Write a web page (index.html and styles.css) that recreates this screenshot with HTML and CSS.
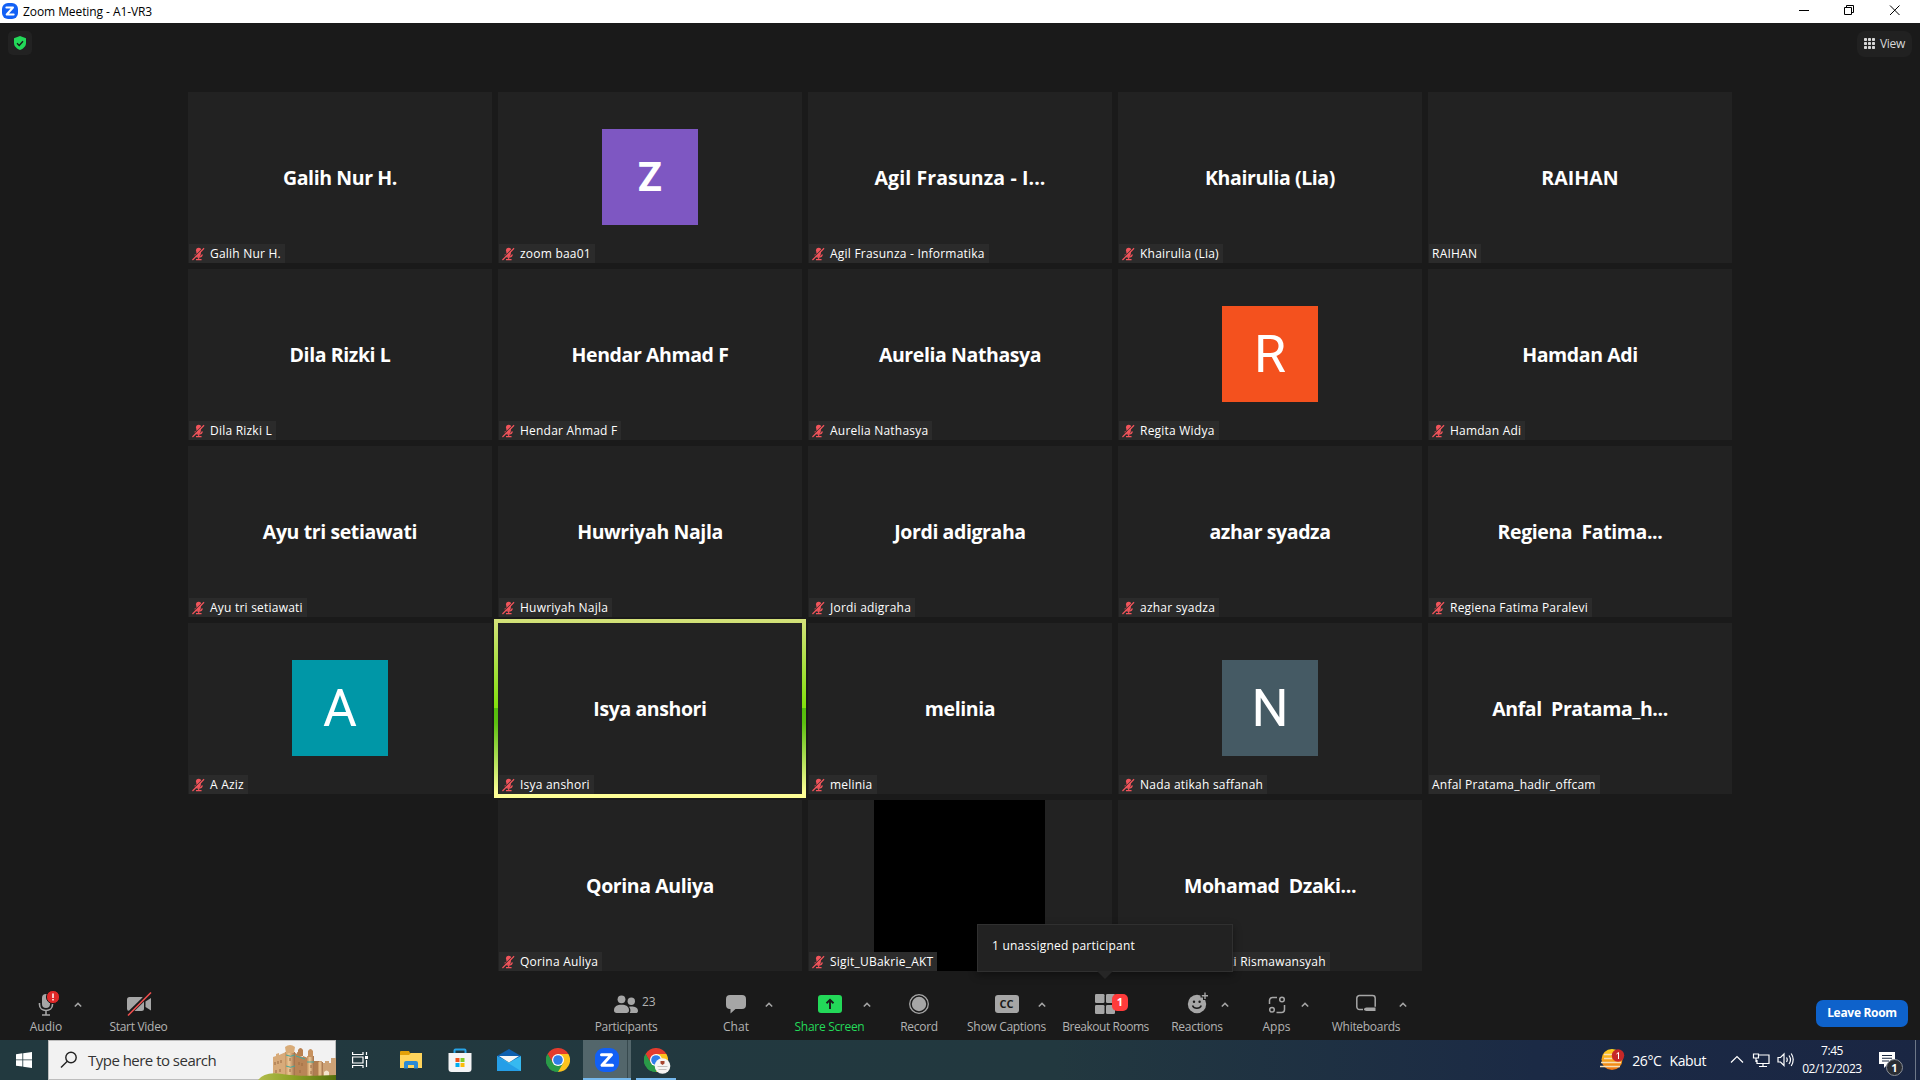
FILE: index.html
```html
<!DOCTYPE html>
<html lang="en">
<head>
    <meta charset="UTF-8">
    <meta name="viewport" content="width=device-width, initial-scale=1.0">
    <title>Zoom Meeting - A1-VR3</title>
    <link rel="stylesheet" href="styles.css">
</head>
<body>
    <!-- Shared icons -->
    <svg class="sprite" width="0" height="0">
        <symbol id="muted" viewBox="0 0 14 14">
            <path d="M4.300 3q0-2.700 2.900-2.700T10.100 3L9 9.500Q7.200 11 5.400 9.500Z" fill="#f2545b"/>
            <path d="M3.300 7.500q0.500 3 3.900 3t3.900-3M7.200 10.500v2.500M4.300 13h6" fill="none" stroke="#f2545b" stroke-width="1.200"/>
            <path d="M0.500 12.300L12.300 0.500" stroke="#2b2b2b" stroke-width="1.200"/>
            <path d="M0.500 13.500L13 0.800" stroke="#f2545b" stroke-width="1.300"/>
        </symbol>
        <symbol id="chevron" viewBox="0 0 8 6">
            <path d="M0.800 4.500L4 1.400L7.200 4.500" fill="none" stroke="#a6a6a6" stroke-width="1.500"/>
        </symbol>
        <symbol id="zoom-logo" viewBox="0 0 24 24">
            <rect width="24" height="24" rx="9" fill="#1260f5"/>
            <path d="M6.500 6.700H16.500L7 17.300H17.500" fill="none" stroke="#fff" stroke-width="3" stroke-linejoin="round" stroke-linecap="round"/>
        </symbol>
        <symbol id="chrome" viewBox="0 0 24 24">
            <path d="M12 12L1.600 6A12 12 0 0 1 22.400 6Z" fill="#e33b2e"/>
            <path d="M12 12L12 24A12 12 0 0 0 22.400 6Z" fill="#fcc31e"/>
            <path d="M12 6H22.400L17.200 15L12 12Z" fill="#fcc31e"/>
            <path d="M1.600 6L6.800 15L12 18L17.200 15L12 24A12 12 0 0 1 1.600 6Z" fill="#2a9a48"/>
            <path d="M1.600 6L6.800 15L12 12L12 6Z" fill="#e33b2e"/>
            <path d="M1.600 6L6.800 15L12 18L12 24A12 12 0 0 1 1.600 6Z" fill="#2a9a48"/>
            <circle cx="12" cy="12" r="6" fill="#fff"/>
            <circle cx="12" cy="12" r="4.800" fill="#2f7de9"/>
        </symbol>
    </svg>

    <!-- Title bar -->
    <header class="titlebar">
        <svg class="titlebar-logo" width="16" height="16"><use href="#zoom-logo"/></svg>
        <span class="titlebar-text">Zoom Meeting - A1-VR3</span>
        <svg class="window-controls" width="106" height="20" viewBox="0 0 106 20" fill="none" stroke="#000">
            <path d="M2 10.500h10"/>
            <path d="M47.500 7.500h7v7h-7zM49.500 7.500v-2h7v7h-2"/>
            <path d="M93 5.500l9.500 9.500M102.500 5.500L93 15"/>
        </svg>
    </header>

    <!-- Meeting area -->
    <main class="meeting">
        <div class="meeting-top">
            <div class="shield">
                <svg width="14" height="14" viewBox="0 0 14 14">
                    <path d="M7 0L13 2.300V7C13 10.500 10 12.800 7 14C4 12.800 1 10.500 1 7V2.300Z" fill="#23d959"/>
                    <path d="M4 7.300L6.200 9.400L10 5.200" fill="none" stroke="#1a1a1a" stroke-width="1.400"/>
                </svg>
            </div>
            <div class="view-btn">
                <svg width="11" height="11" viewBox="0 0 11 11" fill="#d8d8d8">
                    <rect width="3" height="3" rx="0.700"/><rect x="4" width="3" height="3" rx="0.700"/><rect x="8" width="3" height="3" rx="0.700"/>
                    <rect y="4" width="3" height="3" rx="0.700"/><rect x="4" y="4" width="3" height="3" rx="0.700"/><rect x="8" y="4" width="3" height="3" rx="0.700"/>
                    <rect y="8" width="3" height="3" rx="0.700"/><rect x="4" y="8" width="3" height="3" rx="0.700"/><rect x="8" y="8" width="3" height="3" rx="0.700"/>
                </svg>
                <span>View</span>
            </div>
        </div>

        <div class="gallery">
            <div class="tile"><h2>Galih Nur H.</h2><p class="tag"><svg><use href="#muted"/></svg>Galih Nur H.</p></div>
            <div class="tile"><div class="avatar purple">Z</div><p class="tag"><svg><use href="#muted"/></svg>zoom baa01</p></div>
            <div class="tile"><h2 class="wide">Agil Frasunza - I...</h2><p class="tag"><svg><use href="#muted"/></svg>Agil Frasunza - Informatika</p></div>
            <div class="tile"><h2>Khairulia (Lia)</h2><p class="tag"><svg><use href="#muted"/></svg>Khairulia (Lia)</p></div>
            <div class="tile"><h2 class="wide">RAIHAN</h2><p class="tag">RAIHAN</p></div>

            <div class="tile"><h2>Dila Rizki L</h2><p class="tag"><svg><use href="#muted"/></svg>Dila Rizki L</p></div>
            <div class="tile"><h2>Hendar Ahmad F</h2><p class="tag"><svg><use href="#muted"/></svg>Hendar Ahmad F</p></div>
            <div class="tile"><h2>Aurelia Nathasya</h2><p class="tag"><svg><use href="#muted"/></svg>Aurelia Nathasya</p></div>
            <div class="tile"><div class="avatar orange">R</div><p class="tag"><svg><use href="#muted"/></svg>Regita Widya</p></div>
            <div class="tile"><h2>Hamdan Adi</h2><p class="tag"><svg><use href="#muted"/></svg>Hamdan Adi</p></div>

            <div class="tile"><h2>Ayu tri setiawati</h2><p class="tag"><svg><use href="#muted"/></svg>Ayu tri setiawati</p></div>
            <div class="tile"><h2>Huwriyah Najla</h2><p class="tag"><svg><use href="#muted"/></svg>Huwriyah Najla</p></div>
            <div class="tile"><h2>Jordi adigraha</h2><p class="tag"><svg><use href="#muted"/></svg>Jordi adigraha</p></div>
            <div class="tile"><h2>azhar syadza</h2><p class="tag"><svg><use href="#muted"/></svg>azhar syadza</p></div>
            <div class="tile"><h2>Regiena&nbsp; Fatima...</h2><p class="tag"><svg><use href="#muted"/></svg>Regiena Fatima Paralevi</p></div>

            <div class="tile"><div class="avatar teal">A</div><p class="tag"><svg><use href="#muted"/></svg>A Aziz</p></div>
            <div class="tile speaking"><h2>Isya anshori</h2><p class="tag"><svg><use href="#muted"/></svg>Isya anshori</p></div>
            <div class="tile"><h2>melinia</h2><p class="tag"><svg><use href="#muted"/></svg>melinia</p></div>
            <div class="tile"><div class="avatar slate">N</div><p class="tag"><svg><use href="#muted"/></svg>Nada atikah saffanah</p></div>
            <div class="tile"><h2>Anfal&nbsp; Pratama_h...</h2><p class="tag">Anfal Pratama_hadir_offcam</p></div>

            <div class="tile last-row"><h2>Qorina Auliya</h2><p class="tag"><svg><use href="#muted"/></svg>Qorina Auliya</p></div>
            <div class="tile"><div class="video"></div><p class="tag"><svg><use href="#muted"/></svg>Sigit_UBakrie_AKT</p></div>
            <div class="tile"><h2>Mohamad&nbsp; Dzaki...</h2><p class="tag"><svg><use href="#muted"/></svg>Mohamad&nbsp; Dzaki Rismawansyah</p></div>
        </div>

        <!-- Meeting controls -->
        <nav class="controls">
            <div class="tool audio">
                <svg width="30" height="28" viewBox="0 0 30 28">
                    <rect x="11" y="4" width="8" height="14" rx="4" fill="#a6a6a6"/>
                    <path d="M8.500 13v1.500c0 4 3 6 6.500 6s6.500-2 6.500-6v-1.500M15 20.500v4M11 25h8" fill="none" stroke="#a6a6a6" stroke-width="1.600"/>
                    <circle cx="22" cy="7" r="6.600" fill="#e02828" stroke="#1a1a1a"/>
                    <path d="M22 3.500v4.500M22 9v1.500" stroke="#fff" stroke-width="1.500"/>
                </svg>
                <span>Audio</span>
            </div>
            <svg class="more w20" viewBox="0 0 8 6"><use href="#chevron"/></svg>
            <div class="tool start-video">
                <svg width="26" height="28" viewBox="0 0 26 28">
                    <rect x="1" y="7" width="17" height="14" rx="2.500" fill="#a6a6a6"/>
                    <path d="M19.500 11.500L25 8v12.500L19.500 17Z" fill="#a6a6a6"/>
                    <path d="M2 24.500L24.500 2.500" stroke="#1a1a1a" stroke-width="4"/>
                    <path d="M2 25.500L25 2.500" stroke="#f0504f" stroke-width="1.600"/>
                </svg>
                <span>Start Video</span>
            </div>
            <div class="tool participants">
                <svg width="24" height="28" viewBox="0 0 24 28" fill="#a6a6a6">
                    <circle cx="7.500" cy="9.300" r="3.900"/>
                    <path d="M0 20.500c0-4 3-5.700 7.500-5.700s7.500 1.700 7.500 5.700c0 1.500-1 2.500-2.500 2.500h-10c-1.500 0-2.500-1-2.500-2.500z"/>
                    <circle cx="17.300" cy="11.300" r="3.700"/>
                    <path d="M15 16.700c4-.8 9 .3 9 4 0 1.500-.8 2.300-2.300 2.300h-6c1.300-2 .8-4.600-.7-6.300z"/>
                </svg>
                <span>Participants</span>
                <b class="count">23</b>
            </div>
            <div class="tool chat">
                <svg width="20" height="28" viewBox="0 0 20 28">
                    <path d="M4 5h12a4 4 0 0 1 4 4v6a4 4 0 0 1-4 4h-6.500L4.500 23.500V19H4a4 4 0 0 1-4-4V9a4 4 0 0 1 4-4z" fill="#a6a6a6"/>
                </svg>
                <span>Chat</span>
            </div>
            <svg class="more w20" viewBox="0 0 8 6"><use href="#chevron"/></svg>
            <div class="tool share">
                <svg width="24" height="28" viewBox="0 0 24 28">
                    <rect y="5" width="24" height="18" rx="3" fill="#23d959"/>
                    <path d="M12 19V10M8.500 13.200L12 9.800L15.500 13.200" fill="none" stroke="#1a1a1a" stroke-width="1.900"/>
                </svg>
                <span>Share Screen</span>
            </div>
            <svg class="more w26" viewBox="0 0 8 6"><use href="#chevron"/></svg>
            <div class="tool record">
                <svg width="20" height="28" viewBox="0 0 20 28">
                    <circle cx="10" cy="14" r="9.300" fill="none" stroke="#a6a6a6" stroke-width="1.300"/>
                    <circle cx="10" cy="14" r="7.200" fill="#a6a6a6"/>
                </svg>
                <span>Record</span>
            </div>
            <div class="tool captions">
                <i class="cc">CC</i>
                <span>Show Captions</span>
            </div>
            <svg class="more w28" viewBox="0 0 8 6"><use href="#chevron"/></svg>
            <div class="tool breakout">
                <svg width="22" height="28" viewBox="0 0 22 28" fill="#a6a6a6">
                    <rect x="0" y="4" width="9.500" height="9" rx="1.300"/><rect x="11" y="4" width="9" height="9" rx="1.300"/>
                    <rect x="0" y="15" width="9.500" height="9" rx="1.300"/><rect x="11" y="15" width="9" height="9" rx="1.300"/>
                </svg>
                <span>Breakout Rooms</span>
                <b class="badge">1</b>
                <div class="tooltip">1 unassigned participant</div>
            </div>
            <div class="tool reactions">
                <svg width="22" height="28" viewBox="0 0 22 28">
                    <circle cx="11" cy="14" r="9.200" fill="#a6a6a6"/>
                    <path d="M19 1v9M14.500 5.500h8" stroke="#1a1a1a" stroke-width="4"/>
                    <path d="M19 2.500v6.500M15.800 5.700h6.200" stroke="#a6a6a6" stroke-width="1.400"/>
                    <circle cx="8" cy="11.800" r="1.200" fill="#1a1a1a"/><circle cx="13.600" cy="11.800" r="1.200" fill="#1a1a1a"/>
                    <path d="M6.500 15.500c1.500 3.700 7.300 3.700 8.800 0" fill="none" stroke="#1a1a1a" stroke-width="1.500"/>
                </svg>
                <span>Reactions</span>
            </div>
            <svg class="more w22" viewBox="0 0 8 6"><use href="#chevron"/></svg>
            <div class="tool apps">
                <svg width="18" height="28" viewBox="0 0 18 28" fill="none" stroke="#a6a6a6" stroke-width="1.500">
                    <path d="M1.500 13V10.500a3 3 0 0 1 3-3H9M16.500 15v4.500a3 3 0 0 1-3 3H9M1.500 13v1M9.500 22.500h-1"/>
                    <circle cx="14" cy="9.500" r="2.300"/>
                    <circle cx="4" cy="19.800" r="2.300"/>
                </svg>
                <span>Apps</span>
            </div>
            <svg class="more w20" viewBox="0 0 8 6"><use href="#chevron"/></svg>
            <div class="tool whiteboards">
                <svg width="20" height="28" viewBox="0 0 20 28">
                    <path d="M7 19.500H3.500a2.700 2.700 0 0 1-2.700-2.700V8.300a2.700 2.700 0 0 1 2.700-2.700h13a2.700 2.700 0 0 1 2.700 2.700v8.500" fill="none" stroke="#a6a6a6" stroke-width="1.500"/>
                    <path d="M10.500 17.500H19.500V21H10.500Q8 21 8 19.300Q8 17.500 10.500 17.500Z" fill="#a6a6a6"/>
                </svg>
                <span>Whiteboards</span>
            </div>
            <svg class="more w22" viewBox="0 0 8 6"><use href="#chevron"/></svg>
            <button class="leave">Leave Room</button>
        </nav>
    </main>

    <!-- Windows taskbar -->
    <footer class="taskbar">
        <div class="start">
            <svg width="16" height="16" viewBox="0 0 16 16" fill="#fff">
                <path d="M0 2.200L6.400 1.300V7.500H0ZM7.200 1.200L16 0V7.500H7.200ZM0 8.300H6.400V14.600L0 13.700ZM7.200 8.300H16V16L7.200 14.800Z"/>
            </svg>
        </div>
        <div class="search">
            <svg width="18" height="18" viewBox="0 0 18 18" fill="none" stroke="#222" stroke-width="1.400">
                <circle cx="11" cy="6.500" r="5.200"/><path d="M7.300 10.300L1 16.500"/>
            </svg>
            <span>Type here to search</span>
            <svg class="castle" width="78" height="36" viewBox="0 0 78 36">
                <defs>
                    <linearGradient id="stone" x1="0" x2="1">
                        <stop offset="0" stop-color="#c3925f"/><stop offset="0.400" stop-color="#edc796"/><stop offset="1" stop-color="#a06f49"/>
                    </linearGradient>
                    <linearGradient id="grass" x1="0" x2="1">
                        <stop offset="0" stop-color="#b3bd4d"/><stop offset="0.450" stop-color="#8ba125"/><stop offset="1" stop-color="#54700c"/>
                    </linearGradient>
                </defs>
                <path d="M15 13l3-1v-2l3-1v2l7-3v26H15z" fill="#d8ab7a"/>
                <path d="M36 8l3 2v-2l3 1v3l3 1v-1l5 2v22H36z" fill="#b98557"/>
                <path d="M58 19h3v-2h3v2h3v-2h4v2h2v-5h5v20H58z" fill="#cda276"/>
                <path d="M27 8h10v26H27z" fill="url(#stone)"/>
                <path d="M27 3q5-4 10 0l-1 6h-8z" fill="#d9ac78"/>
                <path d="M40 6q2.500-4 5 0v6h-5z" fill="#b9804f"/>
                <path d="M49 12h7v22h-7z" fill="url(#stone)"/>
                <path d="M50 7q2.500-4 5 0v6h-5z" fill="#c7925f"/>
                <path d="M56 17h5v16h-5z" fill="#b07d50"/>
                <path d="M60 18h5v14h-5z" fill="url(#stone)"/>
                <path d="M28 11q4.500 2.500 9 0M28 22q4.500 2.500 9 0M38 12l9 3M49 18h7" fill="none" stroke="#45a79c"/>
                <path d="M17 18v3M20 17v3M23 16v3M18 26v3M22 25v3M32 14v3M32 25v3M41 18v3M44 19v3M42 26v3M53 21v3M53 27v3" stroke="#9b6a42"/>
                <path d="M66 33v-5q2.500-3 5 0v5z" fill="#f3e3cb"/>
                <path d="M0 36Q7 27 24 30Q40 33 78 31V36Z" fill="url(#grass)"/>
            </svg>
        </div>
        <div class="apps-bar">
            <div class="app task-view">
                <svg width="17" height="16" viewBox="0 0 17 16" fill="none" stroke="#fff" stroke-width="1.200">
                    <path d="M0.600 0v2.500h10.400V0M0.600 16v-2.500h10.400V16M0.600 5h10.400v6H0.600zM14.500 0v3M14.500 8v7"/>
                    <path d="M13 4h3v3h-3z" fill="#fff" stroke="none"/>
                </svg>
            </div>
            <div class="app">
                <svg width="22" height="20" viewBox="0 0 22 20">
                    <path d="M0 2q0-1 1-1h8l1 2h12v15H0z" fill="#e2a008"/>
                    <path d="M0 5h9l2-2h11v15H0z" fill="#ffd45c"/>
                    <path d="M4 18.500V13q0-2 2-2h10q2 0 2 2v5.500h-4V15H8v3.500z" fill="#2b8ad6"/>
                </svg>
            </div>
            <div class="app">
                <svg width="24" height="24" viewBox="0 0 24 24">
                    <path d="M6.500 6V2.500q0-1 1-1h9q1 0 1 1V6" fill="none" stroke="#27a4e8" stroke-width="2"/>
                    <path d="M0.500 5h23v16q0 3-3 3h-17q-3 0-3-3z" fill="#f4f4f5"/>
                    <path d="M7.500 10h4v4h-4z" fill="#f1511b"/><path d="M12.500 10h4v4h-4z" fill="#80cc28"/>
                    <path d="M7.500 15h4v4h-4z" fill="#00adef"/><path d="M12.500 15h4v4h-4z" fill="#fbbc09"/>
                </svg>
            </div>
            <div class="app">
                <svg width="24" height="24" viewBox="0 0 24 24">
                    <path d="M0 8L12 1L24 8V13H0Z" fill="#0f5fae"/>
                    <path d="M0 8L12 14.500L24 8V23H0Z" fill="#36b9f0"/>
                    <path d="M0 8L24 23H0Z" fill="#1e93e2" opacity="0.700"/>
                    <path d="M2 8H22L12 14.500Z" fill="#f7f7f7"/>
                </svg>
            </div>
            <div class="app"><svg width="24" height="24"><use href="#chrome"/></svg></div>
            <div class="app active"><svg width="24" height="24"><use href="#zoom-logo"/></svg></div>
            <div class="app running">
                <svg width="28" height="26" viewBox="0 0 28 26">
                    <use href="#chrome" width="24" height="24"/>
                    <circle cx="18.500" cy="18" r="7.800" fill="#f6f4f3"/>
                    <path d="M16.500 13h4v2.500l-2 1.500-2-1.500z" fill="#a8452e"/>
                    <path d="M13.500 18.500h10M14.500 21.500h8" stroke="#c5c0be"/>
                </svg>
            </div>
        </div>
        <div class="weather">
            <svg width="25" height="22" viewBox="0 0 25 22">
                <defs>
                    <linearGradient id="sun" x1="0" y1="0" x2="0" y2="1">
                        <stop offset="0" stop-color="#ffd322"/><stop offset="1" stop-color="#ef7414"/>
                    </linearGradient>
                </defs>
                <circle cx="12" cy="10.500" r="10.500" fill="url(#sun)"/>
                <path d="M4 5.500h8M4 9.500h8M1 13.500h20M0 17.500h20" stroke="#f6dfb6" stroke-width="1.600"/>
                <circle cx="18" cy="6.500" r="6.200" fill="#c62828"/>
                <path d="M16.500 5L18.500 3.500V10" fill="none" stroke="#fff"/>
            </svg>
            <span class="temp">26°C</span><span>Kabut</span>
        </div>
        <svg class="tray" width="64" height="16" viewBox="0 0 64 16" fill="none" stroke="#fff" stroke-width="1.200">
            <path d="M1 10.500L7 4.500L13 10.500"/>
            <path d="M28 3h11v8.500H27V8M33 11.500v3M29 14.500h8M23.500 2h5v4h-5zM26 6v4"/>
            <path d="M48 5.500h2.500L54 2v11.500L50.500 10H48z"/>
            <path d="M56.500 5.500q1.500 2.300 0 4.500M59 3.500q3 4.300 0 8.500M61.200 1.500q4 6 0 12.500"/>
        </svg>
        <div class="clock"><span>7:45</span><span>02/12/2023</span></div>
        <div class="notifications">
            <svg width="16" height="16" viewBox="0 0 16 16">
                <path d="M0 0H16V12H9L5 16V12H0Z" fill="#fff"/>
                <path d="M3 3.500h10M3 6.200h10M3 9h7" stroke="#1b2942" stroke-width="1.100"/>
            </svg>
            <b>1</b>
        </div>
    </footer>
</body>
</html>
```
FILE: styles.css
```css
/* Basic Reset */
* {
    margin: 0;
    padding: 0;
    box-sizing: border-box;
}

body {
    width: 1920px;
    height: 1080px;
    overflow: hidden;
    display: flex;
    flex-direction: column;
    font-family: "Open Sans", "Noto Sans", sans-serif;
    font-size: 12px;
    background-color: #1a1a1a;
    color: #fff;
}

svg {
    display: block;
    flex-shrink: 0;
}

.sprite {
    display: none;
}

/* Title bar */
.titlebar {
    height: 23px;
    display: flex;
    align-items: center;
    padding-left: 2px;
    background-color: #fff;
    color: #000;
}

.titlebar-logo {
    margin-right: 5px;
    margin-bottom: 1px;
}

.titlebar-text {
    line-height: 22px;
    letter-spacing: -0.08px;
}

.window-controls {
    margin-left: auto;
    margin-right: 17px;
    margin-bottom: 3px;
}

/* Meeting area */
.meeting {
    height: 1017px;
    display: flex;
    flex-direction: column;
}

.meeting-top {
    height: 69px;
    padding: 8px 8px 0;
    display: flex;
    justify-content: space-between;
    align-items: flex-start;
}

.shield {
    width: 24px;
    height: 24px;
    display: flex;
    align-items: center;
    justify-content: center;
    border-radius: 5px;
    background-color: #222;
}

.view-btn {
    width: 55px;
    height: 26px;
    padding: 0 0 2px 7px;
    display: flex;
    align-items: center;
    gap: 5px;
    border-radius: 8px;
    background-color: #212121;
    color: #d8d8d8;
    letter-spacing: -0.3px;
}

.gallery {
    display: grid;
    grid-template-columns: repeat(5, 304px);
    grid-auto-rows: 171px;
    gap: 6px;
    padding-left: 188px;
}

.tile {
    position: relative;
    display: flex;
    align-items: center;
    justify-content: center;
    background-color: #222;
}

.tile h2 {
    font-size: 19.5px;
    font-weight: 700;
    letter-spacing: -0.4px;
    line-height: 26px;
    white-space: nowrap;
}

.tile .wide {
    letter-spacing: 0.1px;
}

.last-row {
    grid-column-start: 2;
}

.tag {
    position: absolute;
    left: 1px;
    bottom: 0;
    height: 19px;
    padding: 0 4px 0 3px;
    display: flex;
    align-items: center;
    line-height: 19px;
    letter-spacing: 0.22px;
    background-color: #2b2b2b;
    white-space: nowrap;
}

.tag svg {
    width: 13px;
    height: 14px;
    margin-right: 5px;
}

.avatar {
    width: 96px;
    height: 96px;
    margin-bottom: 1px;
    padding-top: 1px;
    font-family: Roboto, sans-serif;
    font-size: 52px;
    line-height: 96px;
    text-align: center;
}

.purple {
    background-color: #7e57c2;
    font-weight: 700;
    font-size: 40px;
}

.orange {
    background-color: #f4511e;
}

.teal {
    background-color: #0097a7;
}

.slate {
    background-color: #455a64;
}

.video {
    width: 171px;
    height: 171px;
    margin-right: 1px;
    background-color: #000;
}

/* Active speaker frame */
.speaking::before {
    content: "";
    position: absolute;
    inset: -4px;
    border: 4px solid;
    border-image: linear-gradient(#d4e17a, #84e010 48%, #84e010 50%, #55bd0c 50%, #5cc010 58%, #fdfd96 97%) 4;
}

/* Meeting controls */
.controls {
    height: 69px;
    padding-left: 24px;
    display: flex;
    color: #b3b3b3;
}

.tool {
    position: relative;
    display: flex;
    flex-direction: column;
    align-items: center;
    padding-top: 19px;
}

.tool span {
    line-height: 16px;
    letter-spacing: -0.3px;
    white-space: nowrap;
    margin-top: 1px;
}

.more {
    height: 6px;
    margin-top: 31px;
}

.w20 { width: 20px; }
.w22 { width: 22px; }
.w26 { width: 26px; }
.w28 { width: 28px; }

.audio { width: 44px; }
.start-video { width: 101px; }
.participants { width: 80px; margin-left: 397px; }
.chat { width: 46px; margin-left: 47px; }
.share { width: 49px; margin-left: 26px; color: #23d959; }
.record { width: 78px; }
.captions { width: 43px; margin-left: 27px; }
.breakout { width: 99px; }
.reactions { width: 34px; margin-left: 25px; }
.apps { width: 37px; margin-left: 22px; }
.whiteboards { width: 52px; margin-left: 25px; }

.audio span,
.chat span,
.apps span {
    letter-spacing: 0;
}

.breakout span {
    letter-spacing: -0.45px;
}

.count {
    position: absolute;
    left: 56px;
    top: 22px;
    font-weight: 400;
    line-height: 18px;
}

.cc {
    width: 24px;
    height: 18px;
    margin: 5px 0;
    border-radius: 3px;
    background-color: #a6a6a6;
    color: #1a1a1a;
    font-size: 11px;
    font-style: normal;
    font-weight: 700;
    line-height: 18px;
    text-align: center;
}

.badge {
    position: absolute;
    left: 56px;
    top: 23px;
    width: 16px;
    height: 17px;
    border-radius: 5px;
    background-color: #ff3b3b;
    color: #fff;
    font-size: 11px;
    line-height: 16px;
    text-align: center;
}

.tooltip {
    position: absolute;
    left: -79px;
    top: -47px;
    width: 256px;
    height: 48px;
    padding-left: 14px;
    border: 1px solid #303030;
    background-color: #222;
    color: #fff;
    line-height: 42px;
    letter-spacing: 0.23px;
    box-shadow: 0 3px 8px rgba(0, 0, 0, 0.4);
}

.tooltip::after {
    content: "";
    position: absolute;
    left: 119px;
    top: 46px;
    border: 8px solid transparent;
    border-top-color: #262626;
    border-bottom: 0;
}

.leave {
    width: 92px;
    height: 27px;
    margin: 29px 12px 0 auto;
    padding-bottom: 2px;
    border: 0;
    border-radius: 7px;
    background-color: #0e62cb;
    color: #fff;
    font-family: inherit;
    font-size: 12px;
    font-weight: 700;
    letter-spacing: -0.3px;
    white-space: nowrap;
}

/* Taskbar */
.taskbar {
    height: 40px;
    display: flex;
    align-items: center;
    background: linear-gradient(to right, #22393f, #22383f 55%, #1b2a45 80%, #1a2643);
}

.start {
    width: 48px;
    padding-left: 16px;
}

.search {
    position: relative;
    width: 288px;
    height: 40px;
    padding-left: 11px;
    display: flex;
    align-items: center;
    border: 1px solid #bdbdbd;
    background-color: #f2f2f2;
    color: #333;
    font-size: 15px;
    letter-spacing: -0.52px;
}

.search span {
    margin-left: 10px;
}

.castle {
    position: absolute;
    right: -1px;
    bottom: -1px;
}

.apps-bar {
    display: flex;
    height: 40px;
}

.app {
    width: 49px;
    height: 40px;
    display: flex;
    align-items: center;
    justify-content: center;
}

.task-view {
    width: 50px;
    padding-right: 1px;
}

.active {
    background: linear-gradient(to right, #53666b 44px, #37494e 44px, #37494e 45px, #53666b 45px);
    border-bottom: 2px solid #76b9ed;
    padding-top: 2px;
    width: 48px;
    margin-left: 1px;
}

.running {
    width: 40px;
    margin-left: 5px;
    padding: 4px 0 0 4px;
    border-bottom: 2px solid #76b9ed;
}

.weather {
    display: flex;
    align-items: center;
    margin-left: auto;
    font-size: 14px;
    letter-spacing: -0.4px;
}

.temp {
    margin: 0 8px 0 7px;
}

.tray {
    margin-left: 24px;
}

.clock {
    width: 60px;
    margin-left: 8px;
    display: flex;
    flex-direction: column;
    align-items: center;
    line-height: 18px;
    letter-spacing: -0.4px;
}

.notifications {
    position: relative;
    width: 58px;
    height: 40px;
    padding: 12px 0 0 17px;
}

.notifications::after {
    content: "";
    position: absolute;
    right: 4px;
    top: 0;
    height: 40px;
    border-left: 1px solid #6d7788;
}

.notifications b {
    position: absolute;
    left: 24px;
    top: 19px;
    width: 17px;
    height: 17px;
    border: 1px solid #8a8f98;
    border-radius: 50%;
    background-color: #2a2d33;
    font-size: 11px;
    line-height: 15px;
    text-align: center;
}
```
